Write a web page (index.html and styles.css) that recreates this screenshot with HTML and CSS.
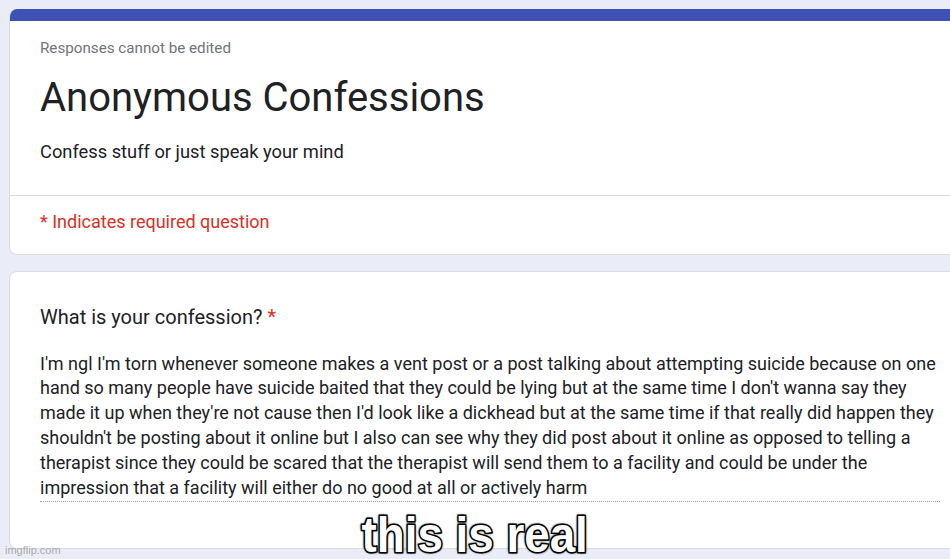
FILE: index.html
```html
<!DOCTYPE html>
<html>
<head>
<meta charset="utf-8">
<link rel="stylesheet" href="styles.css">
</head>
<body>
<div class="page">
  <div class="card header-card">
    <div class="accent"></div>
    <div class="header-main">
      <div class="note">Responses cannot be edited</div>
      <h1 class="title">Anonymous Confessions</h1>
      <div class="desc">Confess stuff or just speak your mind</div>
    </div>
    <div class="required">* Indicates required question</div>
  </div>
  <div class="card question-card">
    <div class="question">What is your confession? <span class="star">*</span></div>
    <div class="answer">I'm ngl I'm torn whenever someone makes a vent post or a post talking about attempting suicide because on one hand so many people have suicide baited that they could be lying but at the same time I don't wanna say they made it up when they're not cause then I'd look like a dickhead but at the same time if that really did happen they shouldn't be posting about it online but I also can see why they did post about it online as opposed to telling a therapist since they could be scared that the therapist will send them to a facility and could be under the impression that a facility will either do no good at all or actively harm</div>
  </div>
</div>
<div class="caption"><span class="caption-text">this is real</span></div>
<div class="watermark">imgflip.com</div>
</body>
</html>
```
FILE: styles.css
```css
html, body {
  margin: 0;
  padding: 0;
  background: #eaedf7;
  overflow: hidden;
  width: 950px;
  height: 559px;
}
body {
  font-family: Roboto, "Liberation Sans", sans-serif;
  color: #202124;
  position: relative;
}
.page {
  padding: 9px 0 0 9px;
  display: flex;
  flex-direction: column;
  gap: 16px;
}
.card {
  width: 980px;
  background: #fff;
  border: 1px solid #dadce0;
  border-radius: 8px;
  box-sizing: border-box;
}
.header-card {
  border-top: none;
  overflow: hidden;
  height: 246px;
}
.accent {
  height: 12px;
  background: #3f51b5;
}
.header-main {
  padding: 17px 30px 0 30px;
  height: 175px;
  box-sizing: border-box;
  border-bottom: 1px solid #dadce0;
}
.note {
  font-size: 15.2px;
  color: #70757a;
  line-height: 20px;
}
.title {
  margin: 16px 0 0 0;
  font-weight: 400;
  font-size: 40px;
  line-height: 48px;
  color: #202124;
}
.desc {
  margin-top: 18px;
  font-size: 18.3px;
  line-height: 24px;
  color: #202124;
}
.required {
  padding: 14px 30px 0 30px;
  color: #d93025;
  font-size: 18px;
  line-height: 24px;
}
.question-card {
  height: 278px;
  padding: 32px 30px 0 30px;
}
.question {
  font-size: 20px;
  line-height: 26px;
  color: #202124;
}
.star {
  color: #d93025;
}
.answer {
  margin-top: 21.6px;
  width: 900px;
  font-size: 18px;
  line-height: 24.8px;
  color: #202124;
  padding-bottom: 1px;
  border-bottom: 1px dotted #9aa0a6;
}
.caption {
  position: absolute;
  left: 0;
  right: 0;
  top: 513px;
  text-align: center;
  font-family: "Liberation Sans", Arial, sans-serif;
  font-weight: 700;
  font-size: 50px;
  line-height: 44px;
  color: #fff;
}
.caption-text {
  display: inline-block;
  transform: scaleX(0.915);
  -webkit-text-stroke: 3px #000;
  paint-order: stroke fill;
  text-shadow: 0 0 3px #000, 0 0 2px #000, 1px 1px 2px #000, -1px -1px 2px #000;
}
.watermark {
  position: absolute;
  left: 5px;
  top: 544px;
  font-family: "Liberation Sans", Arial, sans-serif;
  font-size: 11px;
  line-height: 13px;
  color: #aaaaaa;
}
```
